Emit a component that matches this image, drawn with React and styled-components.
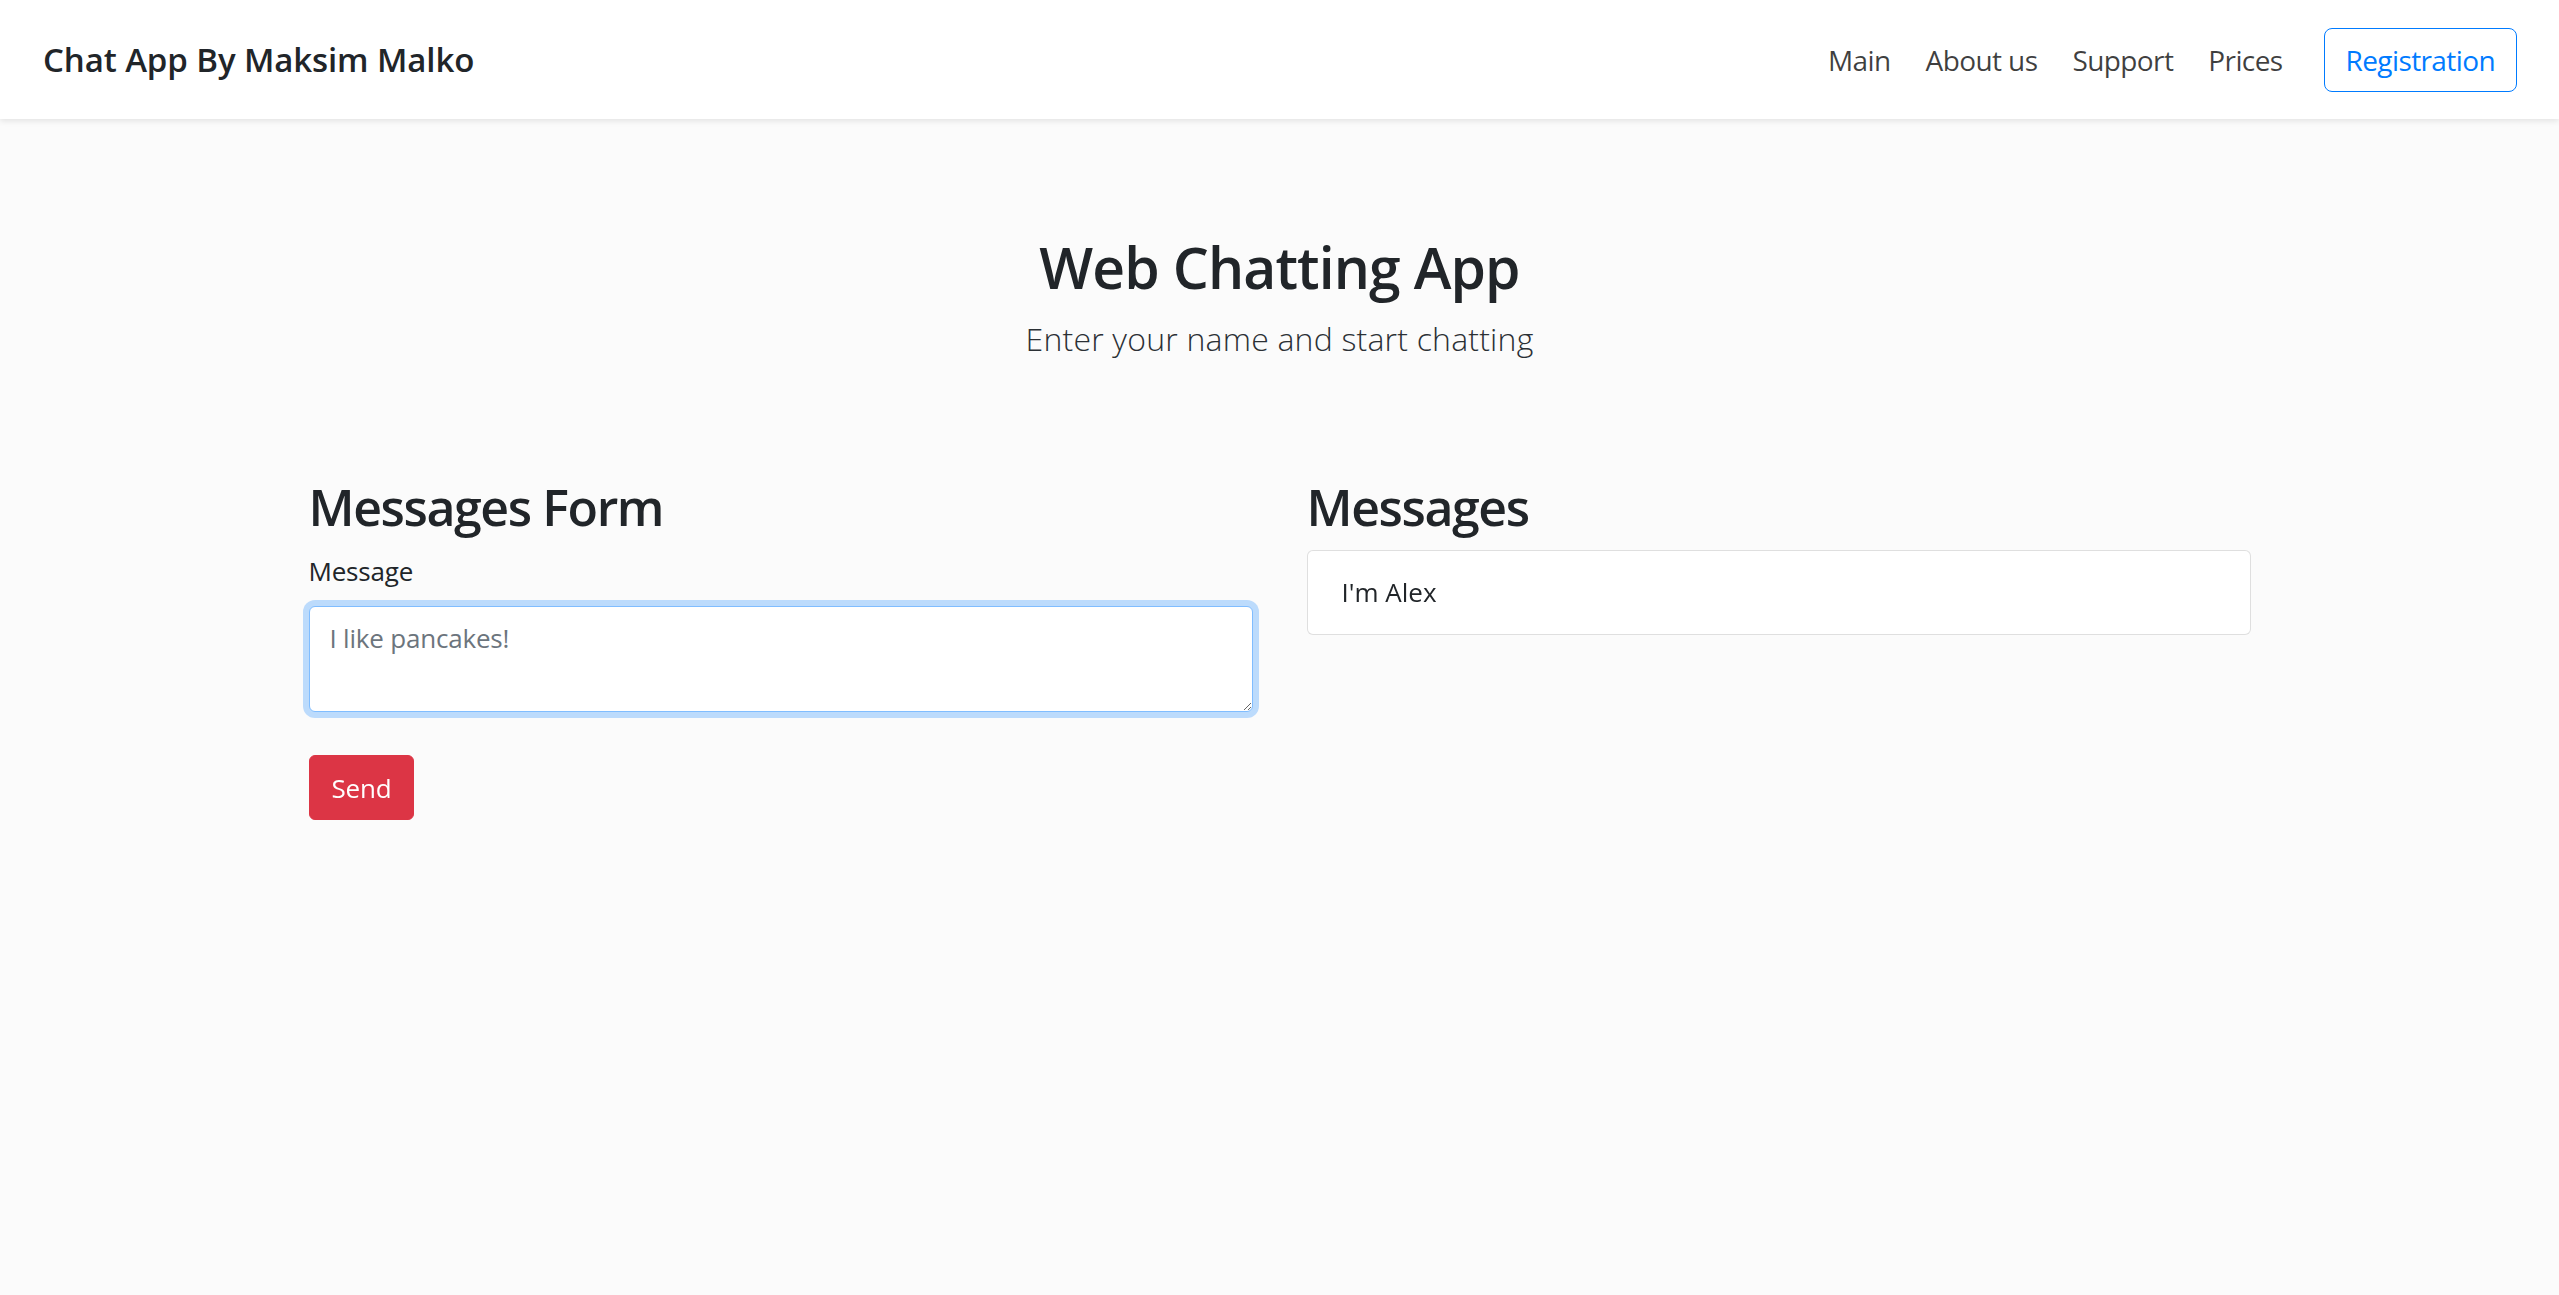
import React from "react";
import styled, { createGlobalStyle } from "styled-components";

const GlobalStyle = createGlobalStyle`
  * {
    box-sizing: border-box;
  }
  html, body {
    margin: 0;
    padding: 0;
  }
  body {
    background: #fbfbfb;
    color: #212529;
    font-family: "Open Sans", "Noto Sans", "Liberation Sans", sans-serif;
    min-height: 1295px;
  }
`;

const Navbar = styled.nav`
  height: 119px;
  background: #fff;
  padding: 0 42px 0 43px;
  display: flex;
  align-items: center;
  justify-content: space-between;
  box-shadow: 0 2px 6px rgba(0, 0, 0, 0.1);
`;

const Brand = styled.a`
  font-size: 33px;
  font-weight: 600;
  color: #212529;
  text-decoration: none;
  letter-spacing: -0.1px;
`;

const NavList = styled.ul`
  display: flex;
  align-items: center;
  list-style: none;
  margin: 0;
  padding: 0;
  gap: 35px;
`;

const NavLink = styled.a`
  font-size: 28px;
  color: rgba(0, 0, 0, 0.75);
  text-decoration: none;
  letter-spacing: -0.6px;
`;

const OutlineButton = styled.button`
  margin-left: 6px;
  height: 64px;
  padding: 0 21px;
  font-family: inherit;
  font-size: 28px;
  letter-spacing: -0.6px;
  color: #007bff;
  background: transparent;
  border: 1px solid #007bff;
  border-radius: 8px;
`;

const Hero = styled.header`
  text-align: center;
  padding-top: 113px;
`;

const Title = styled.h1`
  margin: 0;
  font-size: 57px;
  line-height: 70px;
  font-weight: 600;
  letter-spacing: -0.9px;
`;

const Lead = styled.p`
  margin: 17px 0 0;
  font-size: 32px;
  line-height: 40px;
  font-weight: 300;
  letter-spacing: 0.2px;
  color: #2b3035;
`;

const Columns = styled.main`
  width: 1942px;
  margin: 117px auto 0;
  display: grid;
  grid-template-columns: 1fr 1fr;
  column-gap: 54px;
`;

const Column = styled.section`
  display: flex;
  flex-direction: column;
`;

const SectionTitle = styled.h2`
  margin: 0;
  font-size: 50px;
  line-height: 62px;
  font-weight: 600;
  letter-spacing: -1.4px;
`;

const Label = styled.label`
  margin-top: 14px;
  font-size: 26px;
  line-height: 39px;
  letter-spacing: -0.2px;
`;

const TextArea = styled.textarea`
  margin-top: 15px;
  height: 106px;
  width: 100%;
  padding: 12px 20px;
  font-family: inherit;
  font-size: 26px;
  line-height: 39px;
  letter-spacing: -0.2px;
  color: #495057;
  caret-color: #495057;
  background: #fff;
  border: 1px solid #80bdff;
  border-radius: 6px;
  box-shadow: 0 0 0 6px rgba(0, 123, 255, 0.25);
  outline: none;
  &::placeholder {
    color: #6c757d;
  }
`;

const SendButton = styled.button`
  align-self: flex-start;
  margin-top: 43px;
  height: 65px;
  padding: 0 22px;
  font-family: inherit;
  font-size: 26px;
  letter-spacing: -0.2px;
  color: #fff;
  background: #dc3545;
  border: 1px solid #dc3545;
  border-radius: 6px;
`;

const MessageList = styled.ul`
  margin: 12px 0 0;
  padding: 0;
  list-style: none;
`;

const MessageItem = styled.li`
  padding: 21px 34px;
  font-size: 26px;
  line-height: 41px;
  letter-spacing: 0;
  background: #fff;
  border: 1px solid rgba(0, 0, 0, 0.125);
  border-radius: 6px;
`;

const links = ["Main", "About us", "Support", "Prices"];
const messages = ["I'm Alex"];

export default function App() {
  return (
    <>
      <GlobalStyle />
      <Navbar>
        <Brand href="#">Chat App By Maksim Malko</Brand>
        <NavList>
          {links.map((link) => (
            <li key={link}>
              <NavLink href="#">{link}</NavLink>
            </li>
          ))}
          <li>
            <OutlineButton>Registration</OutlineButton>
          </li>
        </NavList>
      </Navbar>
      <Hero>
        <Title>Web Chatting App</Title>
        <Lead>Enter your name and start chatting</Lead>
      </Hero>
      <Columns>
        <Column>
          <SectionTitle>Messages Form</SectionTitle>
          <Label htmlFor="message">Message</Label>
          <TextArea id="message" placeholder="I like pancakes!" autoFocus />
          <SendButton>Send</SendButton>
        </Column>
        <Column>
          <SectionTitle>Messages</SectionTitle>
          <MessageList>
            {messages.map((text) => (
              <MessageItem key={text}>{text}</MessageItem>
            ))}
          </MessageList>
        </Column>
      </Columns>
    </>
  );
}
